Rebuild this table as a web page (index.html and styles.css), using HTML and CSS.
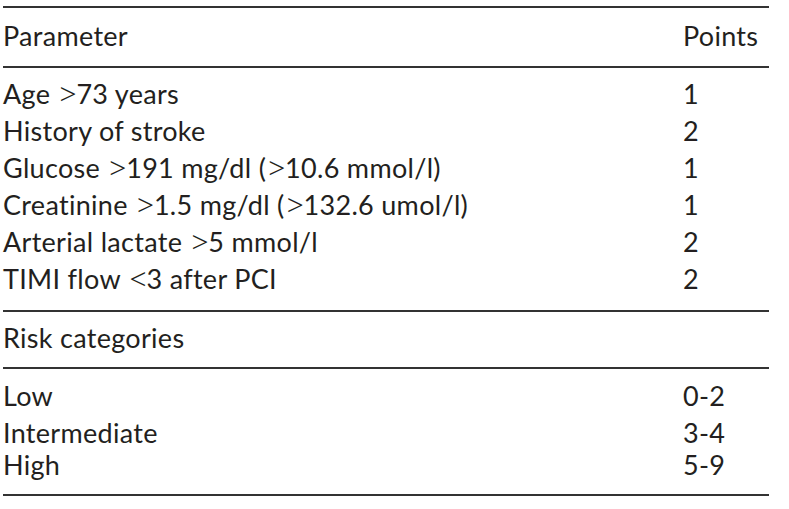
FILE: index.html
```html
<!DOCTYPE html>
<html lang="en">
<head>
<meta charset="utf-8">
<title>Risk score</title>
<link rel="stylesheet" href="styles.css">
</head>
<body>
<div class="tbl">
  <div class="sec sec-head">
    <div class="row"><span>Parameter</span><span>Points</span></div>
  </div>
  <div class="sec sec-params">
    <div class="row"><span>Age <span class="op">&gt;</span>73 years</span><span>1</span></div>
    <div class="row"><span>History of stroke</span><span>2</span></div>
    <div class="row"><span>Glucose <span class="op">&gt;</span>191 mg/dl (<span class="op">&gt;</span>10.6 mmol/l)</span><span>1</span></div>
    <div class="row"><span>Creatinine <span class="op">&gt;</span>1.5 mg/dl (<span class="op">&gt;</span>132.6 umol/l)</span><span>1</span></div>
    <div class="row"><span>Arterial lactate <span class="op">&gt;</span>5 mmol/l</span><span>2</span></div>
    <div class="row"><span>TIMI flow <span class="op">&lt;</span>3 after PCI</span><span>2</span></div>
  </div>
  <div class="sec sec-sub">
    <div class="row"><span>Risk categories</span><span></span></div>
  </div>
  <div class="sec sec-risk">
    <div class="row"><span>Low</span><span>0-2</span></div>
    <div class="row"><span>Intermediate</span><span>3-4</span></div>
    <div class="row row-tight"><span>High</span><span>5-9</span></div>
  </div>
</div>
</body>
</html>
```
FILE: styles.css
```css
html, body {
  margin: 0;
  padding: 0;
  background: #ffffff;
}
body {
  font-family: "Lato", "Open Sans", sans-serif;
  font-size: 27px;
  letter-spacing: 0.3px;
  color: #231f20;
  font-variant-ligatures: none;
}
.tbl {
  width: 766px;
  margin: 6px 0 0 3px;
  border-top: 2px solid #333333;
}
.sec {
  border-bottom: 2px solid #333333;
}
.row {
  display: grid;
  grid-template-columns: 680px 1fr;
  line-height: 37px;
  white-space: nowrap;
}
.op {
  font-family: "Liberation Serif", "DejaVu Serif", serif;
  font-size: 30px;
  line-height: 0;
  letter-spacing: 0;
  margin-left: 2px;
}
.sec-head {
  padding: 9px 0 12px;
}
.sec-params {
  padding: 7px 0 13px;
}
.sec-sub {
  padding: 7px 0 11px;
}
.sec-risk {
  padding: 8px 0 11px;
}
.row-tight {
  margin-top: -5px;
}
```
